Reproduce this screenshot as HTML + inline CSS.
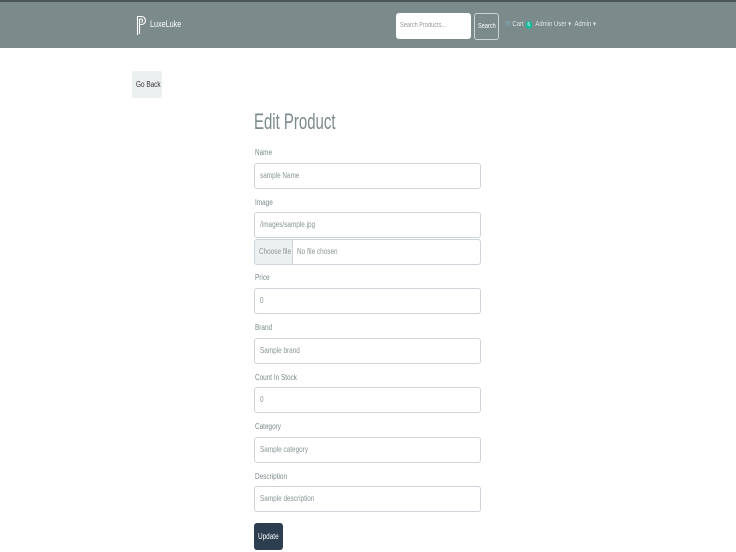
<!DOCTYPE html>
<html><head><style>
*{box-sizing:border-box;margin:0;padding:0}
body{width:736px;height:552px;background:#fff;font-family:"Liberation Sans",sans-serif;position:relative;overflow:hidden;color:#7b8a8b}
.nav{position:absolute;left:0;top:0;width:736px;height:48px;background:#7b8a8b;border-top:2px solid #4a5556}
.abs{position:absolute;white-space:nowrap}
.n{display:inline-block;transform:scaleX(.8);transform-origin:left center}
.lbl{position:absolute;left:255px;font-size:8px;color:#7b8a8b;transform:scaleX(.8);transform-origin:left}
.inp{position:absolute;left:254px;width:227px;height:26px;border:1px solid #ced4da;border-radius:3px;font-size:8px;color:#8a9596;padding-left:5px;line-height:24px;white-space:nowrap;overflow:hidden}
</style></head><body>
<div class="nav">
 <svg class="abs" style="left:136px;top:13px" width="11" height="21" viewBox="0 0 11 21"><path d="M1.5 1v19M1.5 1.5h4a4 4 0 0 1 0 8h-2M3.5 4v15M3.5 4h2a2 2 0 0 1 0 3.5" stroke="#fff" stroke-width="1.1" fill="none"/></svg>
 <div class="abs n" style="left:150px;top:17px;font-size:9px;color:#fff">LuxeLuke</div>
 <div class="abs" style="left:396px;top:11px;width:75px;height:26px;background:#fff;border-radius:3px;font-size:7px;color:#999;padding:9px 0 0 4px"><span class="n">Search Products...</span></div>
 <div class="abs" style="left:474px;top:11px;width:25px;height:27px;border:1px solid #ccd3d3;border-radius:3px;font-size:7px;color:#fff;padding:9px 0 0 3px"><span class="n">Search</span></div>
 <div class="abs n" style="left:505px;top:18px;font-size:7px;color:#dfe5e5;transform:scaleX(.85)">🛒Cart <span style="display:inline-block;width:8px;height:8px;border-radius:4px;background:#18bc9c;color:#fff;text-align:center;font-size:5px;line-height:8px">6</span> &nbsp;Admin User ▾ &nbsp;Admin ▾</div>
</div>
<div class="abs" style="left:132px;top:71px;width:30px;height:27px;background:#ecf0f1;border-radius:2px;font-size:8px;color:#333;padding:9px 0 0 4px"><span class="n">Go Back</span></div>
<div class="abs" style="left:254px;top:109px;font-size:22px;color:#7b8a8b;transform:scaleX(.68);transform-origin:left">Edit Product</div>
<div class="lbl" style="top:148px">Name</div><div class="inp" style="top:163px"><span class="n">sample Name</span></div>
<div class="lbl" style="top:198px">Image</div><div class="inp" style="top:212px"><span class="n">/images/sample.jpg</span></div>
<div class="inp" style="top:239px;padding-left:0"><span style="display:inline-block;background:#ecf0f1;height:24px;width:38px;padding-left:4px;border-right:1px solid #ced4da;vertical-align:top"><span class="n">Choose file</span></span> &nbsp;<span class="n">No file chosen</span></div>
<div class="lbl" style="top:273px">Price</div><div class="inp" style="top:288px"><span class="n">0</span></div>
<div class="lbl" style="top:323px">Brand</div><div class="inp" style="top:338px"><span class="n">Sample brand</span></div>
<div class="lbl" style="top:373px">Count In Stock</div><div class="inp" style="top:387px"><span class="n">0</span></div>
<div class="lbl" style="top:422px">Category</div><div class="inp" style="top:437px"><span class="n">Sample category</span></div>
<div class="lbl" style="top:472px">Description</div><div class="inp" style="top:486px"><span class="n">Sample description</span></div>
<div class="abs" style="left:254px;top:523px;width:29px;height:27px;background:#2c3e50;border-radius:3px;font-size:8px;color:#fff;padding:9px 0 0 4px"><span class="n">Update</span></div>
</body></html>
